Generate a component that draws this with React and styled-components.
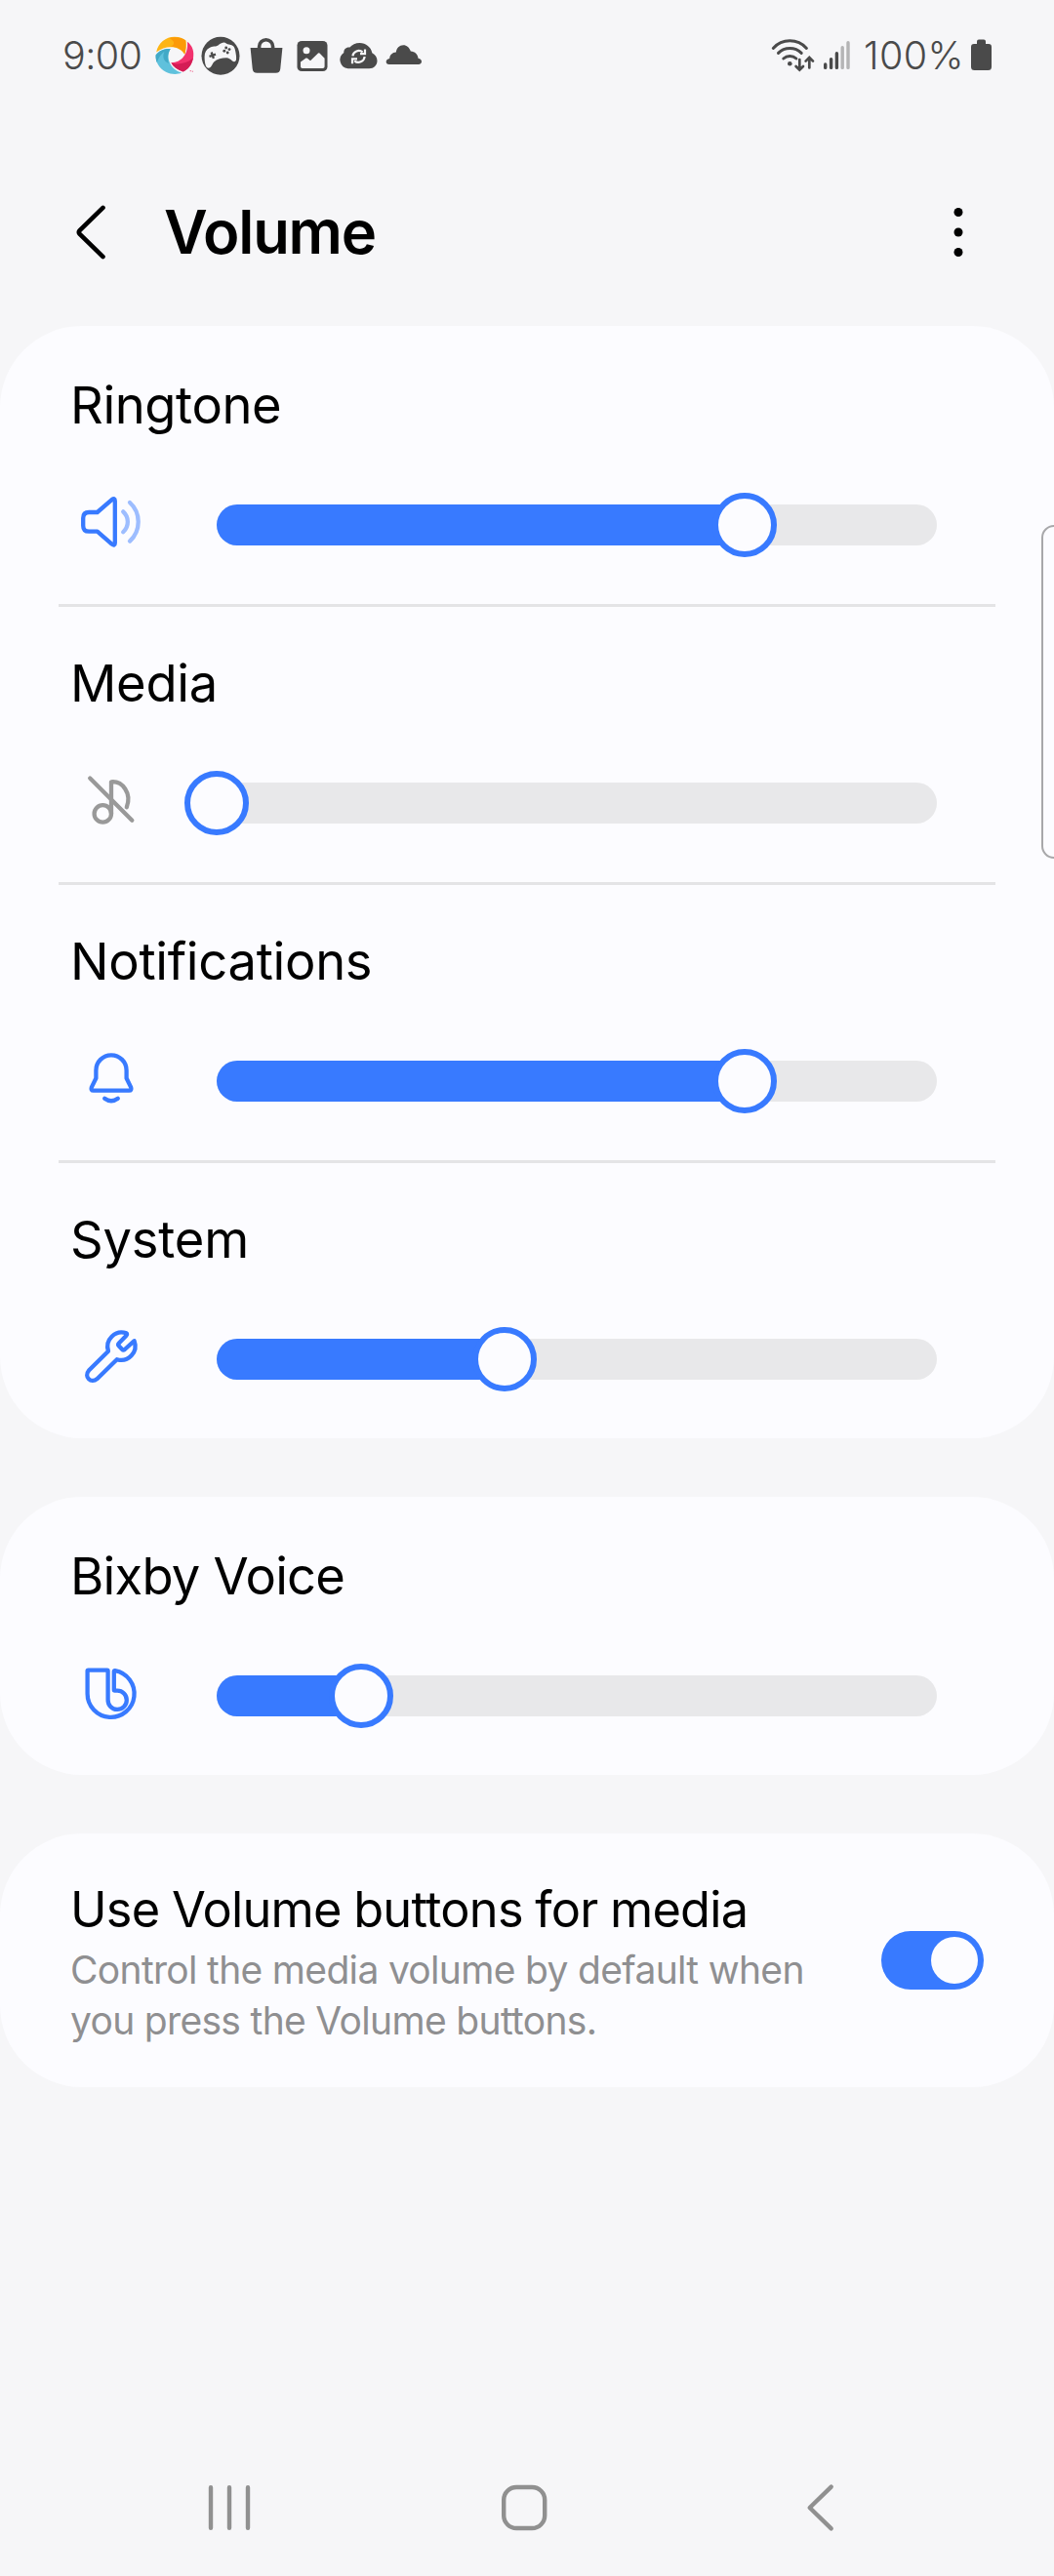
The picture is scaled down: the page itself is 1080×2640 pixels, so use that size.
import React from "react";
import styled, { createGlobalStyle } from "styled-components";

const BLUE = "#387aff";
const INK = "#4a4a4a";
const PAGE = "#f6f6f8";
const CARD = "#fcfcff";

const GlobalStyle = createGlobalStyle`
  * { box-sizing: border-box; }
  body {
    margin: 0;
    background: ${PAGE};
    font-family: Inter, Roboto, "Liberation Sans", sans-serif;
    overflow: hidden;
  }
`;

const Screen = styled.div`
  position: relative;
  display: flex;
  flex-direction: column;
  width: 1080px;
  height: 2640px;
  background: ${PAGE};
  overflow: hidden;
`;

const StatusBar = styled.header`
  display: flex;
  align-items: center;
  justify-content: space-between;
  height: 114px;
  padding: 0 64px 0 64px;
  color: ${INK};
`;

const StatusGroup = styled.div`
  display: flex;
  align-items: center;
  gap: ${(p) => p.$gap}px;
`;

const StatusText = styled.span`
  width: ${(p) => p.$width}px;
  text-align: ${(p) => p.$align || "left"};
  font-size: 39.5px;
  font-weight: 300;
  line-height: 40px;
  letter-spacing: ${(p) => p.$spacing}px;
  white-space: nowrap;
`;

const Glyph = styled.svg`
  display: block;
  flex: none;
  overflow: visible;
`;

const TitleBar = styled.div`
  display: flex;
  align-items: center;
  height: 220px;
  padding: 28px 82px 0 76px;
`;

const Title = styled.h1`
  flex: 1;
  margin: 0 0 0 58px;
  font-size: 61.5px;
  font-weight: 600;
  line-height: 76px;
  letter-spacing: ${(p) => p.$spacing}px;
  color: #000;
`;

const IconButton = styled.button`
  display: flex;
  padding: 0;
  border: 0;
  background: none;
`;

const Cards = styled.main`
  display: flex;
  flex-direction: column;
  gap: 60px;
  flex: 1;
`;

const Card = styled.section`
  display: flex;
  flex-direction: column;
  background: ${CARD};
  border-radius: 84px;
`;

const VolumeRow = styled.div`
  display: flex;
  flex-direction: column;
  height: 285px;
  padding: 0 60px;
`;

const Divider = styled.div`
  height: 3px;
  background: ${(p) => (p.$hidden ? "transparent" : "#e4e4e6")};
`;

const RowLabel = styled.div`
  padding: 46px 0 0 12px;
  font-size: 52.5px;
  line-height: 64px;
  letter-spacing: ${(p) => p.$spacing}px;
  color: #000;
  white-space: nowrap;
`;

const SliderLine = styled.div`
  display: flex;
  align-items: flex-start;
  gap: 72px;
  margin-top: 52px;
  padding-left: 18px;
`;

const Track = styled.div`
  position: relative;
  width: 738px;
  height: 42px;
  margin-top: 18px;
  border-radius: 21px;
  background: #e8e8ea;
`;

const Fill = styled.div`
  height: 100%;
  border-radius: 21px 0 0 21px;
  background: ${BLUE};
`;

const Thumb = styled.div`
  position: absolute;
  top: -12px;
  width: 66px;
  height: 66px;
  margin-left: -33px;
  border: 6px solid ${BLUE};
  border-radius: 50%;
  background: ${CARD};
`;

const SwitchRow = styled.div`
  display: flex;
  align-items: center;
  justify-content: space-between;
  height: 260px;
  padding: 0 72px;
`;

const SwitchText = styled.div`
  padding-top: 4px;
`;

const SwitchTitle = styled.div`
  font-size: 50.5px;
  line-height: 64px;
  letter-spacing: ${(p) => p.$spacing}px;
  word-spacing: -1px;
  color: #000;
  white-space: nowrap;
`;

const Summary = styled.p`
  margin: 4px 0 0;
  font-size: 39px;
  line-height: 52px;
  letter-spacing: ${(p) => p.$spacing}px;
  color: #8f8f91;
  white-space: nowrap;
`;

const Switch = styled.div`
  display: flex;
  justify-content: flex-end;
  width: 105px;
  height: 60px;
  padding: 6px;
  border-radius: 30px;
  background: ${BLUE};
`;

const Knob = styled.div`
  width: 48px;
  height: 48px;
  border-radius: 50%;
  background: ${CARD};
`;

const EdgeHandle = styled.div`
  position: absolute;
  top: 538px;
  left: 1067px;
  width: 40px;
  height: 342px;
  border: 2px solid #a8a8aa;
  border-radius: 13px;
  background: ${CARD};
`;

const NavBar = styled.nav`
  display: flex;
  align-items: center;
  gap: 257px;
  height: 140px;
  padding: 0 213px;
`;

const BatteryIcon = () => (
  <Glyph width="21" height="40" viewBox="0 0 21 40" fill={INK}>
    <path d="M8 3.6H13A2 2 0 0 1 15 5.6V8H18A3 3 0 0 1 21 11V31.5A3.5 3.5 0 0 1 17.5 35H3.5A3.5 3.5 0 0 1 0 31.5V11A3 3 0 0 1 3 8H6V5.6A2 2 0 0 1 8 3.6Z" />
  </Glyph>
);

const WifiIcon = () => (
  <Glyph width="46" height="40" viewBox="0 0 46 40" fill="none" stroke={INK} strokeWidth="3" strokeLinecap="round">
    <path d="M2.3 12.4C11.5 2.3 27.2 2.3 36.4 12.4" />
    <path d="M7.5 17.4C14 10.9 24.7 10.9 31.2 17.4" />
    <path d="M12.8 23C16.5 19.6 22.2 19.6 25.9 23" />
    <circle cx="19.3" cy="28.3" r="2.3" fill={INK} stroke="none" />
    <path d="M29.3 24V34M25.6 31L29.3 34.7L33 31M39.3 32.5V22.5M35.6 25.6L39.3 21.9L43 25.6" strokeWidth="2.7" />
  </Glyph>
);

const SignalIcon = () => (
  <Glyph width="28" height="40" viewBox="0 0 28 40" fill="none" stroke={INK} strokeWidth="3.4" strokeLinecap="round">
    <path d="M2.7 29V32.4M8.6 23.6V32.4M14.4 17.8V32.4" />
    <path d="M20.2 11.8V32.4M26 6.8V32.4" stroke="#b4b4b5" />
  </Glyph>
);

const ApertureIcon = () => (
  <Glyph width="40" height="40" viewBox="0 0 40 40">
    <path d="M1.2 16.5C3 6.8 11 .8 19.8 .8C25 .8 28.6 2.2 31.3 4.6C32 9.5 31.6 14.5 30.2 18.8C25.5 10.2 11.5 8.4 1.2 16.5Z" fill="#fdb515" />
    <path d="M14 1.9C22 .2 28.5 1.8 31.3 4.6C32 9.5 31.6 14.5 30.2 18.8C28 13.6 21.5 10.4 15.5 10.8C21 8.5 20 4.5 14 1.9Z" fill="#fc9a08" />
    <path d="M32.9 5.8C38.3 9.8 40.3 16 38.9 23C37.5 29.5 33.8 34.3 28.6 36.4C22.8 34.6 18.5 31.4 16.4 27.2C26 27.5 34.5 19 32.9 5.8Z" fill="#f2326e" />
    <path d="M38.9 22.5C37.5 29.5 33.8 34.3 28.6 36.4C22.8 34.6 18.5 31.4 16.4 27.2C22 29.8 32 28.5 38.9 22.5Z" fill="#d41c55" />
    <path d="M.6 19.5C4.2 14.6 9.5 12.4 15.7 13C10.8 21 14.3 33.8 27.1 37.6C22.5 39.8 16.2 39.4 11 36.8C4 33 .2 26.2 .6 19.5Z" fill="#5fc1dc" />
    <path d="M.6 19.5C4.2 14.6 9.5 12.4 15.7 13C12.5 18 12.2 23 14 28C8.5 26 7 21 9.5 15.8C6.5 18 3.8 21.5 1.7 27C.8 24.5 .5 22 .6 19.5Z" fill="#42a9c7" />
    <path d="M35.6 35.7H37M37.8 36.2H39" stroke="#ee6a92" strokeWidth="1" />
  </Glyph>
);

const GamepadIcon = () => (
  <Glyph width="40" height="40" viewBox="0 0 40 40">
    <circle cx="20" cy="20.3" r="19.5" fill={INK} />
    <path d="M13.5 10.6C17.2 10.9 19.7 6.4 23.5 6.4C25 6.4 26.5 8.3 28.5 8.6C31.2 9 33.8 9.8 34.7 13.2C35.7 17 36.4 21.5 36 24C35.7 26.3 33.8 26.8 31.8 25.2C30 23.6 28.4 22.2 26 22.2C21 22.2 16.5 23.5 13.2 26.5C11.5 28.2 10.5 32.6 7.8 32.8C4.3 32.8 3.6 26 3.6 21C3.6 16.8 5.6 13.6 8.3 12.2C10.2 11.3 11.8 10.5 13.5 10.6Z" fill={PAGE} />
    <path d="M8.5 20.8L15 18.6M10.6 16.5L12.9 22.9" stroke={INK} strokeWidth="2.3" />
    <g fill={INK}>
      <circle cx="23.8" cy="15.3" r="1.45" />
      <circle cx="25.7" cy="12" r="1.45" />
      <circle cx="29" cy="13.6" r="1.45" />
      <circle cx="27.2" cy="17" r="1.45" />
    </g>
  </Glyph>
);

const BagIcon = () => (
  <Glyph width="40" height="40" viewBox="0 0 40 40">
    <path d="M3.6 12H36.4L34.3 33.3Q34 37.8 29.5 37.8H10.5Q6 37.8 5.7 33.3Z" fill={INK} />
    <path d="M12.6 13V10.7A7 7 0 0 1 26.6 10.7V13" fill="none" stroke={INK} strokeWidth="3.6" />
  </Glyph>
);

const PhotoIcon = () => (
  <Glyph width="40" height="40" viewBox="0 0 40 40">
    <rect x="4.5" y="5" width="31" height="31" rx="4.6" fill={INK} />
    <circle cx="14" cy="14.8" r="3.5" fill={PAGE} />
    <path d="M8 26.4L13.5 22.6Q14.3 22.2 15 22.7L18 25.3L26 17.6Q26.8 17 27.5 17.6L32.6 22.8V31.2Q32.6 33 30.8 33H9.8Q8 33 8 31.2Z" fill={PAGE} />
  </Glyph>
);

const CloudSyncIcon = () => (
  <Glyph width="40" height="40" viewBox="0 0 40 40">
    <path d="M9.5 33.2A8.9 8.9 0 0 1 5.3 17C5.2 13.4 8 10.9 11.4 11.6C13.7 8.7 17.3 7 21.5 7C28 7 33.2 11.3 34.3 17.2C37.4 18.7 39.5 21.7 39.5 25.2C39.5 29.7 36 33.2 31.3 33.2Z" fill={INK} />
    <g fill="none" stroke={PAGE} strokeWidth="2.2">
      <path d="M14.4 20.4A6.3 6.3 0 0 1 24.6 16.4M26.6 21A6.3 6.3 0 0 1 16.2 25.3" />
      <path d="M27 13.4V18.2H22M14 28.2V23.4H19" />
    </g>
  </Glyph>
);

const CloudIcon = () => (
  <Glyph width="40" height="40" viewBox="0 0 40 40">
    <path d="M4.8 29C.6 28.9 .6 23.4 5.2 22.9C5.5 19.2 8 16.9 11.8 16.6C12.5 12.2 15.2 9.3 19.3 9.3C22.8 9.3 25.4 11.8 26.8 15.5C31.1 15.7 34.2 18.8 34.5 22.8C39.2 23.5 39 28.9 34.8 29Z" fill={INK} />
  </Glyph>
);

const RowIcon = ({ muted, children }) => (
  <Glyph
    width="72"
    height="72"
    viewBox="0 0 72 72"
    fill="none"
    stroke={muted ? "#999999" : BLUE}
    strokeWidth="4.3"
    strokeLinecap="round"
    strokeLinejoin="round"
  >
    {children}
  </Glyph>
);

const SpeakerIcon = () => (
  <RowIcon>
    <path d="M21.7 26H13.2Q7.2 26 7.2 32V39.7Q7.2 45.7 13.2 45.7H21.7L36.6 58.6Q39.8 61 39.8 57.5V14.3Q39.8 10.8 36.6 13.1Z" />
    <g stroke="#9dbdff">
      <path d="M48.2 25.4C54.4 31 54.4 40.4 48.2 46.2" />
      <path d="M55 16C66.6 26.6 66.6 44.8 55 55.6" />
    </g>
  </RowIcon>
);

const MutedNoteIcon = () => (
  <RowIcon muted>
    <circle cx="27.3" cy="49.9" r="8.7" />
    <path d="M36 49.9V17.3C47.5 16.2 57.2 29 51.8 43.2" />
    <path d="M14.2 13.6L57.3 56.7" />
  </RowIcon>
);

const BellIcon = () => (
  <RowIcon>
    <path d="M20.4 27.9A15.6 15.6 0 0 1 51.6 27.9V36L56.2 45.4Q57.2 48.7 54.2 48.7H17.8Q14.8 48.7 15.8 45.4L20.4 36Z" />
    <path d="M29.2 56.8Q36 61.8 42.8 56.8" />
  </RowIcon>
);

const WrenchIcon = () => (
  <RowIcon>
    <path d="M51.6 12.4A14.5 14.5 0 0 0 33 30.7L13 50.6C7.6 57 15.4 64.2 21.4 59.2L41.8 39.2A14.5 14.5 0 0 0 59.6 20.2L49.8 29Q48.3 30.2 47 28.8L43.9 25.6Q42.4 24 43.9 22.5L51.2 15Q52.8 13 51.6 12.4Z" />
  </RowIcon>
);

const BixbyIcon = () => (
  <RowIcon>
    <path d="M11.6 13.6Q11.6 12.7 12.5 12.7H31.8Q32.6 12.7 32.6 13.6V43A9.6 9.6 0 1 0 42.2 33.7H39.7Q38.8 33.7 38.8 32.8V14.1Q38.8 13 39.8 13.2A24 24 0 1 1 11.6 36.7Z" />
  </RowIcon>
);

const BackIcon = () => (
  <Glyph width="34" height="60" viewBox="0 0 34 60" fill="none" stroke="#000" strokeWidth="4.6" strokeLinecap="round" strokeLinejoin="round">
    <path d="M29.5 4.9L5.7 28.2Q4 30 5.7 31.8L29.5 55.1" />
  </Glyph>
);

const MoreIcon = () => (
  <Glyph width="32" height="60" viewBox="0 0 32 60" fill="#000">
    <circle cx="16" cy="9.5" r="4.5" />
    <circle cx="16" cy="30" r="4.5" />
    <circle cx="16" cy="50.5" r="4.5" />
  </Glyph>
);

const NavIcon = ({ width, children }) => (
  <Glyph width={width} height="50" viewBox={`0 0 ${width} 50`} fill="none" stroke="#909090" strokeWidth="4.4" strokeLinecap="round" strokeLinejoin="round">
    {children}
  </Glyph>
);

const VolumeControl = ({ label, spacing, value, icon, first }) => (
  <VolumeRow>
    <Divider $hidden={first} />
    <RowLabel $spacing={spacing}>{label}</RowLabel>
    <SliderLine>
      {icon}
      <Track>
        <Fill style={{ width: `${value * 100}%` }} />
        <Thumb style={{ left: `${value * 100}%` }} />
      </Track>
    </SliderLine>
  </VolumeRow>
);

export default function App() {
  return (
    <>
      <GlobalStyle />
      <Screen>
        <StatusBar>
          <StatusGroup $gap={7}>
            <StatusText $width={88} $spacing={-0.6}>9:00</StatusText>
            <ApertureIcon />
            <GamepadIcon />
            <BagIcon />
            <PhotoIcon />
            <CloudSyncIcon />
            <CloudIcon />
          </StatusGroup>
          <StatusGroup $gap={7}>
            <WifiIcon />
            <SignalIcon />
            <StatusText $width={110} $align="right" $spacing={0.4}>100%</StatusText>
            <BatteryIcon />
          </StatusGroup>
        </StatusBar>

        <TitleBar>
          <IconButton aria-label="Back"><BackIcon /></IconButton>
          <Title $spacing={-1.2}>Volume</Title>
          <IconButton aria-label="More options"><MoreIcon /></IconButton>
        </TitleBar>

        <Cards>
          <Card>
            <VolumeControl first label="Ringtone" spacing={-0.4} value={11 / 15} icon={<SpeakerIcon />} />
            <VolumeControl label="Media" spacing={-0.3} value={0} icon={<MutedNoteIcon />} />
            <VolumeControl label="Notifications" spacing={-0.3} value={11 / 15} icon={<BellIcon />} />
            <VolumeControl label="System" spacing={-0.2} value={0.4} icon={<WrenchIcon />} />
          </Card>
          <Card>
            <VolumeControl first label="Bixby Voice" spacing={-0.75} value={0.2} icon={<BixbyIcon />} />
          </Card>
          <Card>
            <SwitchRow>
              <SwitchText>
                <SwitchTitle $spacing={-0.75}>Use Volume buttons for media</SwitchTitle>
                <Summary $spacing={-0.68}>
                  Control the media volume by default when
                  <br />
                  you press the Volume buttons.
                </Summary>
              </SwitchText>
              <Switch role="switch" aria-checked="true"><Knob /></Switch>
            </SwitchRow>
          </Card>
        </Cards>

        <NavBar>
          <NavIcon width={44}>
            <path d="M3 4.2V45.8M22 4.2V45.8M41 4.2V45.8" />
          </NavIcon>
          <NavIcon width={46}>
            <rect x="2.2" y="4" width="42" height="42" rx="13" />
          </NavIcon>
          <NavIcon width={38}>
            <path d="M34.7 3.6L12.7 25L34.7 46.4" />
          </NavIcon>
        </NavBar>
        <EdgeHandle />
      </Screen>
    </>
  );
}
